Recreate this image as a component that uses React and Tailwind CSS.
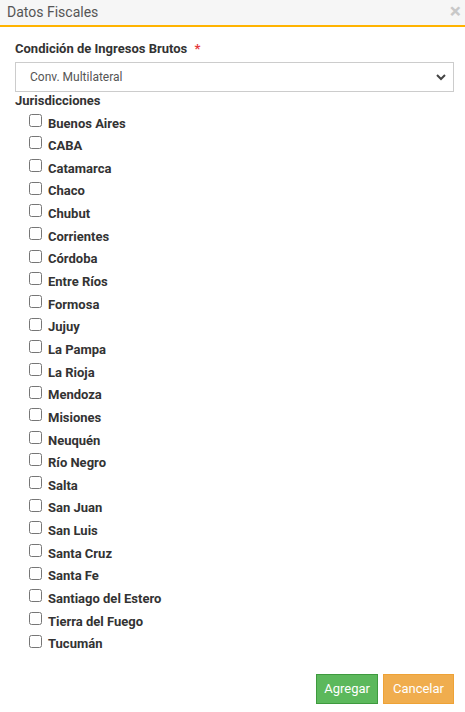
import React, { useState } from 'react';

const provincias = [
  'Buenos Aires', 'CABA', 'Catamarca', 'Chaco', 'Chubut', 'Corrientes', 'Córdoba',
  'Entre Ríos', 'Formosa', 'Jujuy', 'La Pampa', 'La Rioja', 'Mendoza', 'Misiones',
  'Neuquén', 'Río Negro', 'Salta', 'San Juan', 'San Luis', 'Santa Cruz', 'Santa Fe',
  'Santiago del Estero', 'Tierra del Fuego', 'Tucumán',
];

export default function App() {
  const [checked, setChecked] = useState({});
  const [condicion, setCondicion] = useState('multilateral');

  return (
    <div className="w-[465px] h-[712px] bg-white flex flex-col" style={{ fontFamily: 'Roboto, "Liberation Sans", sans-serif' }}>
      <div className="h-[27px] bg-[#f6f6f6] border-b-2 border-[#ffb300] flex items-center justify-between pl-[7px] pr-[4px]">
        <span className="text-[14px] text-[#555]">Datos Fiscales</span>
        <span className="text-[#c8c8c8] text-[21px] leading-none font-bold -mt-[2px]">×</span>
      </div>

      <div className="pl-[15px] pr-[11px] pt-[13px] flex-1 flex flex-col">
        <label className="text-[13px] font-bold text-[#333] leading-[18px]">
          Condición de Ingresos Brutos <span className="text-[#e4393c] ml-1">*</span>
        </label>
        <div className="relative mt-[4px]">
          <select
            value={condicion}
            onChange={(e) => setCondicion(e.target.value)}
            className="appearance-none w-full h-[30px] border border-[#ccc] bg-white pl-[14px] text-[12px] text-[#555] outline-none"
          >
            <option value="multilateral">Conv. Multilateral</option>
            <option value="local">Local</option>
          </select>
          <svg className="absolute right-[8px] top-[11px] pointer-events-none" width="10" height="8" viewBox="0 0 10 8">
            <path d="M1 2 L5 6 L9 2" fill="none" stroke="#444" strokeWidth="2" />
          </svg>
        </div>
        <div className="text-[13px] font-bold text-[#333] leading-[18px]">Jurisdicciones</div>

        <div className="pl-[14px] mt-[2px]">
          {provincias.map((p) => (
            <label key={p} className="h-[22.65px] flex items-center gap-[6px] text-[13px] text-[#333] font-bold">
              <input
                type="checkbox"
                checked={!!checked[p]}
                onChange={() => setChecked({ ...checked, [p]: !checked[p] })}
                className="w-[13px] h-[13px] m-0 relative -top-[3px]"
              />
              <span>{p}</span>
            </label>
          ))}
        </div>

        <div className="mt-auto mb-[8px] flex justify-end gap-[5px]">
          <button className="h-[30px] px-[7px] bg-[#5cb85c] border border-[#3e9a3e] text-white text-[13px]">Agregar</button>
          <button className="h-[30px] px-[9px] bg-[#f0ad4e] border border-[#eea236] text-white text-[13px]">Cancelar</button>
        </div>
      </div>
    </div>
  );
}
